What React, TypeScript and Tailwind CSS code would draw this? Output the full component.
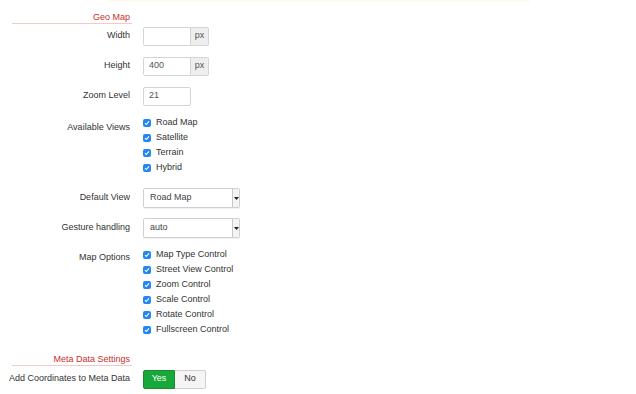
import type { ReactNode } from "react";

const font = "font-['Liberation_Sans','Helvetica',Arial,sans-serif]";

function Heading({ children }: { children: ReactNode }) {
  return (
    <div className="ml-[12px] w-[120px] border-b border-[#f6c9c9] pr-[2px] text-right text-[9px] leading-[11px] text-[#c8302c]">
      {children}
    </div>
  );
}

function Row({ label, children, className = "h-[30px] items-center" }: { label: string; children: ReactNode; className?: string }) {
  return (
    <div className={`flex ${className}`}>
      <div className="w-[130px] shrink-0 text-right text-[9px] text-[#333]">{label}</div>
      <div className="ml-[13px]">{children}</div>
    </div>
  );
}

function TextInput({ value, addon }: { value: string; addon?: string }) {
  return (
    <div className="flex h-[19px] text-[9px] text-[#555]">
      <div className={`flex w-[48px] items-center border border-[#d4d4d4] bg-white pl-[5px] ${addon ? "rounded-l-[2px]" : "rounded-[2px]"}`}>
        {value}
      </div>
      {addon && (
        <div className="flex w-[18px] items-center justify-center rounded-r-[2px] border border-l-0 border-[#d4d4d4] bg-[#eeeeee] text-[#555]">
          {addon}
        </div>
      )}
    </div>
  );
}

function Select({ value }: { value: string }) {
  return (
    <div className="flex h-[20px] w-[97px] items-center rounded-[2px] border border-[#d0d0d0] bg-white text-[9px] text-[#444] shadow-[0_1px_1px_rgba(0,0,0,0.06)]">
      <span className="flex-1 pl-[6px]">{value}</span>
      <span className="flex h-full w-[7px] items-center justify-center border-l border-[#c8c8c8] bg-[#f4f4f4]">
        <svg width="5" height="3" viewBox="0 0 5 3">
          <path d="M0 0h5L2.5 3z" fill="#222" />
        </svg>
      </span>
    </div>
  );
}

function Check({ label }: { label: string }) {
  return (
    <div className="flex h-[15px] items-center gap-[5px] text-[9px] text-[#333]">
      <span className="flex h-[8px] w-[8px] items-center justify-center rounded-[2px] bg-[#2486f5]">
        <svg width="6" height="6" viewBox="0 0 6 6">
          <path d="M1 3.2l1.3 1.3L5 1.4" fill="none" stroke="#fff" strokeWidth="1.1" />
        </svg>
      </span>
      {label}
    </div>
  );
}

export default function App() {
  return (
    <div className={`relative h-[394px] w-[636px] overflow-hidden bg-white ${font}`}>
      <div className="ml-[107px] h-[2px] w-[423px] bg-[#fcfcf2]" />
      <div className="pt-[10px]">
        <Heading>Geo Map</Heading>
      </div>
      <div className="mt-[-3px]">
        <Row label="Width">
          <TextInput value="" addon="px" />
        </Row>
        <Row label="Height">
          <TextInput value="400" addon="px" />
        </Row>
        <Row label="Zoom Level">
          <TextInput value="21" />
        </Row>
        <Row label="Available Views" className="mt-[10px] items-start">
          <div className="-mt-[6px]">
            <Check label="Road Map" />
            <Check label="Satellite" />
            <Check label="Terrain" />
            <Check label="Hybrid" />
          </div>
        </Row>
        <div className="mt-[8px]" />
        <Row label="Default View">
          <Select value="Road Map" />
        </Row>
        <Row label="Gesture handling">
          <Select value="auto" />
        </Row>
        <Row label="Map Options" className="mt-[8px] items-start">
          <div className="-mt-[4px]">
            <Check label="Map Type Control" />
            <Check label="Street View Control" />
            <Check label="Zoom Control" />
            <Check label="Scale Control" />
            <Check label="Rotate Control" />
            <Check label="Fullscreen Control" />
          </div>
        </Row>
      </div>
      <div className="mt-[17px]">
        <Heading>Meta Data Settings</Heading>
      </div>
      <div className="mt-[3px]">
        <Row label="Add Coordinates to Meta Data" className="h-[20px] items-center">
          <div className="flex h-[19px] text-[9px]">
            <span className="flex w-[32px] items-center justify-center rounded-l-[2px] border border-[#1f8a2e] bg-[#17a83a] text-white">
              Yes
            </span>
            <span className="flex w-[31px] items-center justify-center rounded-r-[2px] border border-l-0 border-[#cfcfcf] bg-[#f5f5f5] text-[#333]">
              No
            </span>
          </div>
        </Row>
      </div>
    </div>
  );
}
